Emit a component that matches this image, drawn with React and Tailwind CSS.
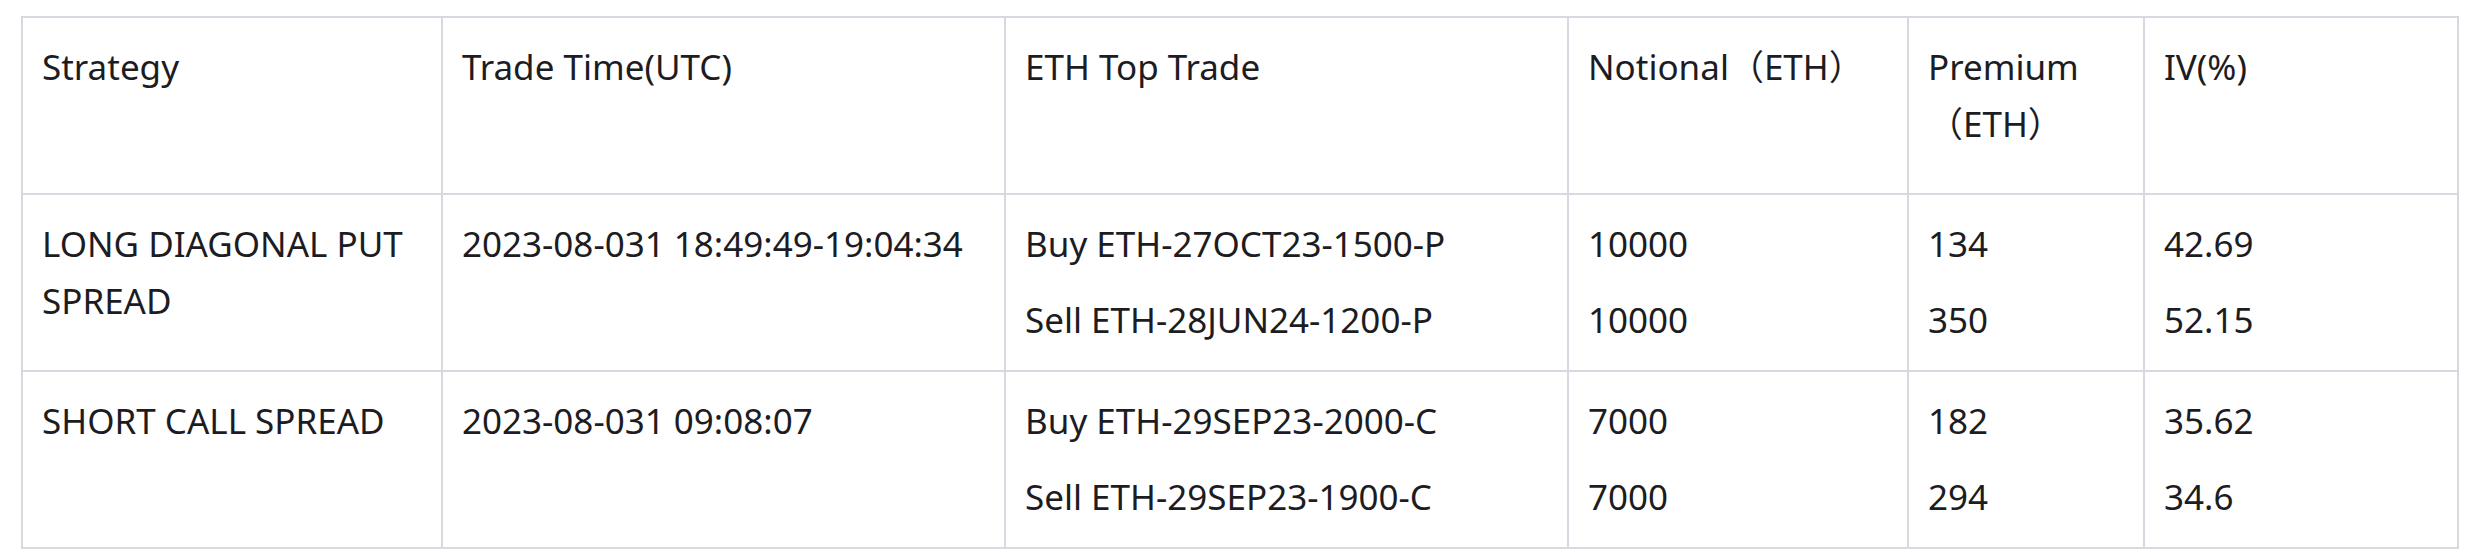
import React from "react";

const rows = [
  {
    strategy: "LONG DIAGONAL PUT SPREAD",
    time: "2023-08-031 18:49:49-19:04:34",
    legs: [
      ["Buy ETH-27OCT23-1500-P", "10000", "134", "42.69"],
      ["Sell ETH-28JUN24-1200-P", "10000", "350", "52.15"],
    ],
  },
  {
    strategy: "SHORT CALL SPREAD",
    time: "2023-08-031 09:08:07",
    legs: [
      ["Buy ETH-29SEP23-2000-C", "7000", "182", "35.62"],
      ["Sell ETH-29SEP23-1900-C", "7000", "294", "34.6"],
    ],
  },
];

const cell = "border-2 border-[#d6d9df] align-top pt-[20px] pl-[19px] pr-[20px]";

function Stack({ items }) {
  return (
    <div className="flex flex-col gap-[19px]">
      {items.map((t, i) => (
        <div key={i}>{t}</div>
      ))}
    </div>
  );
}

export default function App() {
  return (
    <div className="bg-white w-[2472px] h-[560px] pt-[16px] pl-[21px]">
      <table
        className="table-fixed border-collapse text-[35px] leading-[57px] text-[#1c1c22]"
        style={{ fontFamily: '"Noto Sans", "Noto Sans CJK JP", sans-serif' }}
      >
        <colgroup>
          <col className="w-[420px]" />
          <col className="w-[563px]" />
          <col className="w-[563px]" />
          <col className="w-[340px]" />
          <col className="w-[236px]" />
          <col className="w-[314px]" />
        </colgroup>
        <thead>
          <tr className="h-[177px]">
            <th className={`${cell} font-normal text-left`}>Strategy</th>
            <th className={`${cell} font-normal text-left`}>Trade Time(UTC)</th>
            <th className={`${cell} font-normal text-left`}>ETH Top Trade</th>
            <th className={`${cell} font-normal text-left`}>Notional（ETH）</th>
            <th className={`${cell} font-normal text-left`}>Premium（ETH）</th>
            <th className={`${cell} font-normal text-left`}>IV(%)</th>
          </tr>
        </thead>
        <tbody>
          {rows.map((r, i) => (
            <tr key={i} className="h-[177px]">
              <td className={cell}>{r.strategy}</td>
              <td className={cell}>{r.time}</td>
              <td className={cell}>
                <Stack items={r.legs.map((l) => l[0])} />
              </td>
              <td className={cell}>
                <Stack items={r.legs.map((l) => l[1])} />
              </td>
              <td className={cell}>
                <Stack items={r.legs.map((l) => l[2])} />
              </td>
              <td className={cell}>
                <Stack items={r.legs.map((l) => l[3])} />
              </td>
            </tr>
          ))}
        </tbody>
      </table>
    </div>
  );
}
